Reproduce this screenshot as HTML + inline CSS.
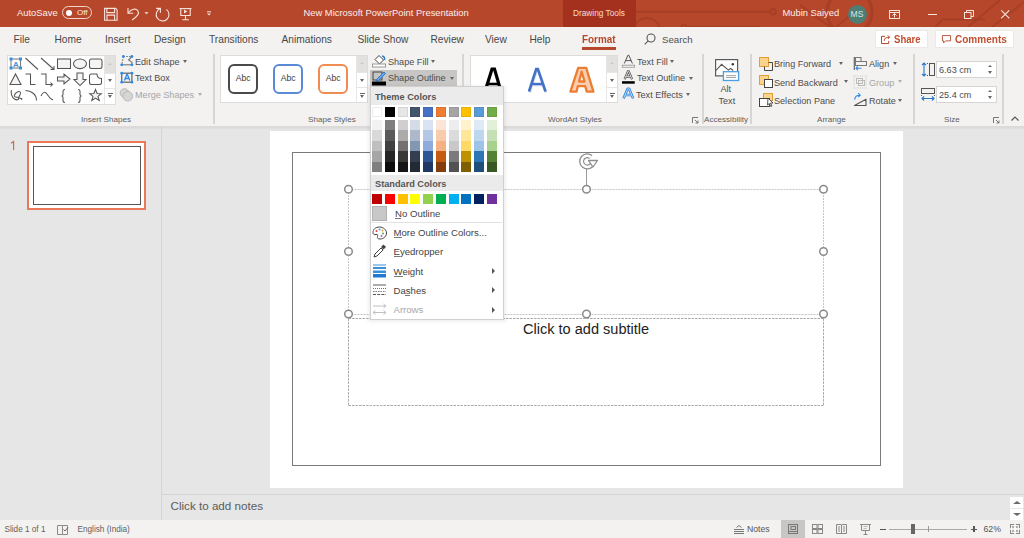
<!DOCTYPE html>
<html><head><meta charset="utf-8">
<style>
*{margin:0;padding:0;box-sizing:border-box}
html,body{width:1024px;height:538px;overflow:hidden;background:#e6e6e6;font-family:"Liberation Sans",sans-serif;color:#444}
.a{position:absolute}
.t{position:absolute;white-space:nowrap;line-height:1}
.sep{position:absolute;width:1.5px;background:#d8d6d4}
.gal{position:absolute;background:#fff;border:1px solid #dedcda}
.tab{font-size:10.2px;color:#484848;top:35px}
.rb{font-size:9.1px;color:#4c4c4c}
.grp{font-size:8.1px;color:#606060;top:116px}
.dd{position:absolute;width:0;height:0;border-left:2.5px solid transparent;border-right:2.5px solid transparent;border-top:3px solid #666}
.mi{font-size:9.6px;color:#444}
svg{position:absolute;overflow:visible}
</style></head><body>
<!-- ===== TITLE BAR ===== -->
<div class="a" style="left:0;top:0;width:1024px;height:27px;background:#b7472a"></div>
<svg style="left:0;top:0" width="1024" height="27">
 <g stroke="#a73f26" stroke-width="2" fill="none">
  <line x1="636" y1="11.7" x2="770" y2="11.7"/>
  <circle cx="773" cy="11.7" r="2.8"/>
  <circle cx="647" cy="31" r="13"/>
  <circle cx="684" cy="27" r="2.5"/>
  <line x1="687" y1="27" x2="760" y2="27"/>
  <circle cx="849.5" cy="12" r="22.5" stroke-width="3"/>
  <line x1="836" y1="27" x2="851" y2="15"/>
  <line x1="800" y1="5" x2="830" y2="27"/>
  <path d="M935 27l8-7.5h42"/>
  <line x1="968" y1="27" x2="1000" y2="0"/>
  <line x1="992" y1="27" x2="1024" y2="2"/>
 </g>
</svg>
<div class="a" style="left:563px;top:0;width:73px;height:27px;background:#a3311e"></div>
<div class="t" style="left:573px;top:9px;font-size:8.3px;color:#f4dcd6">Drawing Tools</div>
<div class="t" style="left:303.5px;top:8px;font-size:9.4px;color:#fbeeea">New Microsoft PowerPoint Presentation</div>
<div class="t" style="left:17px;top:8px;font-size:9.4px;color:#fbeeea">AutoSave</div>
<div class="a" style="left:62px;top:6px;width:30px;height:13px;border:1px solid #f3d6cf;border-radius:7px"></div>
<div class="a" style="left:65.5px;top:9.5px;width:6px;height:6px;background:#fff;border-radius:50%"></div>
<div class="t" style="left:77px;top:8.5px;font-size:8px;color:#fbeeea">Off</div>
<!-- save icon -->
<svg style="left:0;top:0" width="220" height="27">
 <g stroke="#f7e3de" stroke-width="1.1" fill="none">
  <path d="M104.6 8.4h11l1.5 1.5v10.4h-12.5z"/>
  <path d="M106.8 8.4v4.2h7.8v-4.2"/>
  <path d="M107 20.3v-5.2h7.6v5.2"/>
  <path d="M128 8v5.3h5.2"/>
  <path d="M128.3 13c3-4 7.5-5 9.5-2.3 1.8 2.5 0 5.5-5.8 9.3"/>
  <path d="M166.4 9.4A6.4 6.4 0 1 1 160.2 8.6"/>
  <path d="M156.2 8.4h4.2v4.3"/>
  <path d="M179.5 8.6h12"/>
  <path d="M180.8 8.6v6.9h9.4v-6.9"/>
  <path d="M185.5 15.5v4.1M182.3 19.8h6.6"/>
 </g>
 <path d="M184 9.6l3.3 1.9-3.3 1.9z" fill="#f7e3de"/>
 <path d="M144.5 12.3h4l-2 2z" fill="#f7e3de"/>
 <path d="M207 11.8h4" stroke="#f7e3de" stroke-width="1"/>
 <path d="M207 13.4h4l-2 2z" fill="#f7e3de"/>
</svg>
<div class="t" style="left:782.5px;top:9px;font-size:9.35px;color:#fbeeea">Mubin Saiyed</div>
<div class="a" style="left:848px;top:4.5px;width:19px;height:19px;border-radius:50%;background:#4e7d74"></div>
<div class="t" style="left:850.5px;top:9.5px;font-size:8.6px;color:#d6e6e2">MS</div>
<!-- ribbon display options -->
<svg style="left:889px;top:9.5px" width="11" height="9" viewBox="0 0 11 9">
 <g stroke="#f7e3de" stroke-width="1" fill="none"><rect x="0.5" y="0.5" width="10" height="8"/><path d="M0.5 2.5h10"/><path d="M5.5 7.5v-4M3.5 5.5l2-2 2 2"/></g>
</svg>
<div class="a" style="left:927.5px;top:13.5px;width:9px;height:1px;background:#f7e3de"></div>
<svg style="left:964px;top:9.5px" width="10" height="9" viewBox="0 0 10 9">
 <g stroke="#f7e3de" stroke-width="1" fill="none"><rect x="0.5" y="2.5" width="6.5" height="6"/><path d="M2.5 2.5v-2h7v6h-2.5"/></g>
</svg>
<svg style="left:1001px;top:10px" width="8.5" height="8.5" viewBox="0 0 8.5 8.5">
 <g stroke="#f7e3de" stroke-width="1.1" fill="none"><path d="M0.3 0.3l8 8M8.2 0.3l-8 8"/></g>
</svg>

<!-- ===== TABS ===== -->
<div class="a" style="left:0;top:27px;width:1024px;height:99px;background:#f3f2f1"></div>
<div class="t tab" style="left:13.5px">File</div>
<div class="t tab" style="left:54.5px">Home</div>
<div class="t tab" style="left:105px">Insert</div>
<div class="t tab" style="left:154px">Design</div>
<div class="t tab" style="left:209px">Transitions</div>
<div class="t tab" style="left:281.5px">Animations</div>
<div class="t tab" style="left:357.5px">Slide Show</div>
<div class="t tab" style="left:430.5px">Review</div>
<div class="t tab" style="left:485px">View</div>
<div class="t tab" style="left:529.5px">Help</div>
<div class="t tab" style="left:582.3px;color:#b7472a;font-size:10.8px;top:34px;font-weight:bold;transform:scaleX(0.915);transform-origin:0 0">Format</div>
<div class="a" style="left:582px;top:47px;width:34px;height:3px;background:#b7472a"></div>
<svg style="left:644px;top:33px" width="12" height="12" viewBox="0 0 12 12">
 <g stroke="#555" stroke-width="1.1" fill="none"><circle cx="7" cy="5" r="4"/><path d="M4.2 7.8L0.7 11.3"/></g>
</svg>
<div class="t tab" style="left:662px;font-size:9.7px;color:#505050;top:35px">Search</div>
<!-- Share / Comments -->
<div class="a" style="left:875px;top:29.5px;width:53px;height:18.5px;background:#fff;border:1px solid #ebe9e7;border-radius:1px"></div>
<svg style="left:881px;top:35px" width="10" height="9" viewBox="0 0 11 10">
 <g stroke="#b7472a" stroke-width="1.1" fill="none"><path d="M4.5 1.5h-4v8h8v-3"/><path d="M3.5 6.5c0-3 2-4 6-4"/><path d="M7.5 0.5l2 2-2 2"/></g>
</svg>
<div class="t" style="left:894px;top:35.2px;font-size:10.4px;color:#c0502f;font-weight:bold;transform:scaleX(0.92);transform-origin:0 0">Share</div>
<div class="a" style="left:935px;top:29.5px;width:79px;height:18.5px;background:#fff;border:1px solid #ebe9e7;border-radius:1px"></div>
<svg style="left:942px;top:35px" width="9" height="8.5" viewBox="0 0 11 10">
 <g stroke="#b7472a" stroke-width="1.1" fill="none"><path d="M0.5 0.5h10v6.5h-6l-2.5 2.5v-2.5h-1.5z"/></g>
</svg>
<div class="t" style="left:954.5px;top:35.2px;font-size:10.4px;color:#c0502f;font-weight:bold;transform:scaleX(0.965);transform-origin:0 0">Comments</div>
<!-- ===== RIBBON ===== -->
<div class="a" style="left:0;top:126px;width:1024px;height:1px;background:#dcdad8"></div>
<div class="a" style="left:0;top:127px;width:1024px;height:3px;background:linear-gradient(#d9d9d9,#e6e6e6)"></div>
<!-- Insert Shapes gallery -->
<div class="gal" style="left:7px;top:55px;width:109px;height:50px"></div>
<div class="a" style="left:104px;top:56px;width:11px;height:17px;background:#e3e1df"></div>
<div class="a" style="left:104px;top:56px;width:1px;height:48px;background:#e8e6e4"></div>
<div class="a" style="left:104px;top:73px;width:11px;height:1px;background:#e8e6e4"></div>
<div class="a" style="left:104px;top:88px;width:11px;height:1px;background:#e8e6e4"></div>
<div class="dd" style="left:107.5px;top:63px;border-top:none;border-bottom:2.5px solid #c8c8c8"></div>
<div class="dd" style="left:107.5px;top:79px"></div>
<div class="a" style="left:107.5px;top:92.5px;width:5px;height:1px;background:#666"></div>
<div class="dd" style="left:107.5px;top:95px"></div>
<svg style="left:8px;top:56px" width="96" height="48" viewBox="0 0 96 48">
 <g stroke="#555" stroke-width="1.05" fill="none">
  <!-- row1 -->
  <rect x="3" y="3" width="9.5" height="9" stroke="#777"/>
  <line x1="17.5" y1="2" x2="30" y2="13.5"/>
  <line x1="33" y1="2" x2="46" y2="13.5"/><path d="M42.5 13.5h3.5v-3.5"/>
  <rect x="49.5" y="3" width="13" height="9.5" fill="#f4f4f4"/>
  <ellipse cx="72" cy="7.8" rx="6.5" ry="4.8" fill="#f4f4f4"/>
  <rect x="81.5" y="3" width="12.5" height="9.5" rx="2" fill="#f4f4f4"/>
  <!-- row2 -->
  <path d="M2 28.5l5.5-10.5 5.5 10.5z" fill="#f4f4f4"/>
  <path d="M17.5 18h5v10.5h5"/>
  <path d="M33 18h5v10.5h6"/><path d="M42.5 26.5l2 2-2 2"/>
  <path d="M49.5 21h6.5v-3l6 5-6 5v-3h-6.5z" fill="#f4f4f4"/>
  <path d="M69 17h6v6.5h3l-6 6-6-6h3z" fill="#f4f4f4"/>
  <path d="M81.5 20a2 2 0 0 1 2-2h5.5c0 2.5 1.5 4.5 4.5 4.5v4a2 2 0 0 1-2 2h-8a2 2 0 0 1-2-2z" />
  <!-- row3 -->
  <path d="M3.5 34c-1 3 0 7 3 9 2 1.5 5 1 4-1s-5 0-4-3 6-5 6-2-3 4-1 5 3 0 2 2"/>
  <path d="M17.5 34.5c6 0 11 4 11 10"/>
  <path d="M33 40c2-4 4-5 6-2s3 5 6 6"/>
  <path d="M57 33.5c-1.5 0-2 .5-2 2v3c0 1-.5 1.5-1.5 1.5 1 0 1.5.5 1.5 1.5v3c0 1.5.5 2 2 2"/>
  <path d="M70 33.5c1.5 0 2 .5 2 2v3c0 1 .5 1.5 1.5 1.5-1 0-1.5.5-1.5 1.5v3c0 1.5-.5 2-2 2"/>
  <path d="M87.5 33.5l1.6 4 4.2.2-3.3 2.7 1.2 4.1-3.7-2.4-3.7 2.4 1.2-4.1-3.3-2.7 4.2-.2z" fill="#f4f4f4"/>
 </g>
 <g fill="#3a8fd9">
  <rect x="1.5" y="1.5" width="3" height="3"/><rect x="11" y="1.5" width="3" height="3"/>
  <rect x="1.5" y="10.5" width="3" height="3"/><rect x="11" y="10.5" width="3" height="3"/>
 </g>
 <text x="5" y="11" font-size="8" font-weight="bold" fill="#3a8fd9" font-family="Liberation Sans">A</text>
</svg>
<!-- Edit Shape / Text Box / Merge -->
<svg style="left:120px;top:55px" width="15" height="48" viewBox="0 0 15 48">
 <g stroke="#777" stroke-width="1.1" fill="none">
  <path d="M3.4 1.5h8.5M3.4 1.5L1.7 9.8" stroke-dasharray="1.6 1.2"/>
  <path d="M1.7 9.8h10.2"/>
  <path d="M11.9 1.5L8.6 5l3.3 2.2v2.6"/>
 </g>
 <g fill="#2e8ae6">
  <circle cx="3.4" cy="1.5" r="1.4"/><circle cx="11.9" cy="1.5" r="1.4"/><circle cx="1.7" cy="9.8" r="1.4"/><circle cx="11.9" cy="9.8" r="1.4"/>
 </g>
 <rect x="1.7" y="18.2" width="10.2" height="9" stroke="#6a6a6a" stroke-width="1.3" fill="none"/>
 <g fill="#2e8ae6">
  <circle cx="1.7" cy="18.2" r="1.4"/><circle cx="11.9" cy="18.2" r="1.4"/><circle cx="1.7" cy="27.2" r="1.4"/><circle cx="11.9" cy="27.2" r="1.4"/>
 </g>
 <path d="M4.4 25.5l2.4-6h0.6l2.4 6M5.3 23.5h3.6" stroke="#2e8ae6" stroke-width="1.3" fill="none"/>
 <g stroke="#b8b8b8" stroke-width="1" fill="#d6d6d6"><circle cx="4.5" cy="38" r="4.3"/><circle cx="7.8" cy="41.2" r="4.8"/></g>
 <path d="M4.5 33.7a4.3 4.3 0 0 1 0 8.6" stroke="#b8b8b8" fill="none" opacity="0"/>
</svg>
<div class="t rb" style="left:135px;top:57.5px">Edit Shape</div><div class="dd" style="left:183.0px;top:60.0px"></div>
<div class="t rb" style="left:135px;top:73.5px">Text Box</div>
<div class="t rb" style="left:135px;top:90.7px;color:#a6a6a6">Merge Shapes</div><div class="dd" style="left:198.0px;top:92.5px;border-top-color:#b0b0b0"></div>
<div class="t grp" style="left:81px">Insert Shapes</div>
<div class="sep" style="left:213px;top:54px;height:70px"></div>

<!-- Shape Styles gallery -->
<div class="gal" style="left:220px;top:55px;width:148px;height:48px"></div>
<div class="a" style="left:356px;top:56px;width:11px;height:17px;background:#e3e1df"></div>
<div class="a" style="left:356px;top:56px;width:1px;height:46px;background:#e8e6e4"></div>
<div class="a" style="left:356px;top:72px;width:11px;height:1px;background:#e8e6e4"></div>
<div class="a" style="left:356px;top:87px;width:11px;height:1px;background:#e8e6e4"></div>
<div class="dd" style="left:359.5px;top:62px;border-top:none;border-bottom:2.5px solid #c8c8c8"></div>
<div class="dd" style="left:359.5px;top:79px"></div>
<div class="a" style="left:359.5px;top:92.5px;width:5px;height:1px;background:#666"></div>
<div class="dd" style="left:359.5px;top:95px"></div>
<div class="a" style="left:228px;top:64px;width:30px;height:30px;border:2px solid #4a4a4a;border-radius:6px"></div>
<div class="a" style="left:273px;top:64px;width:30px;height:30px;border:2px solid #5d8ad6;border-radius:6px"></div>
<div class="a" style="left:318px;top:64px;width:30px;height:30px;border:2px solid #f08c52;border-radius:6px"></div>
<div class="t" style="left:235.7px;top:74px;font-size:8.6px;color:#3a3a3a">Abc</div>
<div class="t" style="left:280.7px;top:74px;font-size:8.6px;color:#3a3a3a">Abc</div>
<div class="t" style="left:325.7px;top:74px;font-size:8.6px;color:#3a3a3a">Abc</div>
<!-- Shape Fill / Outline -->
<div class="a" style="left:370px;top:70px;width:87px;height:17px;background:#c8c6c4"></div>
<svg style="left:372px;top:54px" width="14" height="32" viewBox="0 0 14 32">
 <path d="M3 5.5l4-4 4.5 4.5-4 4z" stroke="#444" stroke-width="1" fill="#fff"/>
 <path d="M10 2c2 0 3 2 2.5 4" stroke="#2a78c8" stroke-width="1.5" fill="none"/>
 <rect x="0.5" y="10" width="13" height="3" stroke="#999" stroke-width="1" fill="#fff"/>
 <rect x="1" y="18" width="9" height="8" stroke="#444" stroke-width="1" fill="none"/>
 <path d="M5 25l7-7 1.5 1.5-7 7-2 .5z" stroke="#2a78c8" stroke-width="1" fill="#6aaae8"/>
 <rect x="0" y="27.5" width="14" height="4" fill="#000"/>
</svg>
<div class="t rb" style="left:388px;top:58px">Shape Fill</div><div class="dd" style="left:431.0px;top:60.0px"></div>
<div class="t rb" style="left:388px;top:73.5px">Shape Outline</div><div class="dd" style="left:450.0px;top:76.5px"></div>
<div class="t grp" style="left:308px">Shape Styles</div>
<div class="sep" style="left:462px;top:54px;height:70px"></div>

<!-- WordArt gallery -->
<div class="gal" style="left:470px;top:55px;width:148px;height:48px"></div>
<div class="a" style="left:606px;top:56px;width:11px;height:17px;background:#e3e1df"></div>
<div class="a" style="left:606px;top:56px;width:1px;height:46px;background:#e8e6e4"></div>
<div class="a" style="left:606px;top:72px;width:11px;height:1px;background:#e8e6e4"></div>
<div class="a" style="left:606px;top:87px;width:11px;height:1px;background:#e8e6e4"></div>
<div class="dd" style="left:609.5px;top:62px;border-top:none;border-bottom:2.5px solid #c8c8c8"></div>
<div class="dd" style="left:609.5px;top:79px"></div>
<div class="a" style="left:609.5px;top:92.5px;width:5px;height:1px;background:#666"></div>
<div class="dd" style="left:609.5px;top:95px"></div>
<svg style="left:470px;top:55px" width="136" height="47" viewBox="0 0 136 47">
 <path d="M15 36.5L22 14h2.5L31 36.5" stroke="#000" stroke-width="3.2" fill="none" stroke-linejoin="miter"/>
 <path d="M18 29h10" stroke="#000" stroke-width="2.6"/>
 <g opacity="0.25" transform="translate(0.6,1)"><path d="M59 36.5L66.2 14h1.6L75.5 36.5M62 29h11" stroke="#4472c4" stroke-width="2.6" fill="none"/></g>
 <path d="M59 36.5L66.2 14h1.6L75.5 36.5" stroke="#4472c4" stroke-width="2.6" fill="none"/>
 <path d="M62 29h11" stroke="#4472c4" stroke-width="2.4"/>
 <path d="M108.2 12.8h8L123.4 36.6h-6.6L115.2 31.2h-7.4L106.6 36.6h-6.2z M111.7 16.7L109 26.5h5.5z" fill="#f8cfb2" fill-rule="evenodd" stroke="#ed7d31" stroke-width="2.3" stroke-linejoin="round"/>
</svg>
<!-- Text Fill/Outline/Effects -->
<svg style="left:617px;top:52px" width="20" height="50" viewBox="0 0 20 50">
 <path d="M7.3 11.5L10.9 3.2h0.9L15.4 11.5M8.6 8.6h5.5" stroke="#555" stroke-width="1" fill="none"/>
 <rect x="5.3" y="13.2" width="12.3" height="2" stroke="#999" stroke-width="0.9" fill="#fff"/>
 <path d="M7.6 27.3L11 19.3h0.7L15.1 27.3M8.9 24.6h4.9" stroke="#555" stroke-width="2.2" fill="none"/>
 <path d="M7.6 27.3L11 19.3h0.7L15.1 27.3M8.9 24.6h4.9" stroke="#fff" stroke-width="0.7" fill="none"/>
 <rect x="5" y="29.2" width="12.7" height="2.5" fill="#000"/>
 <path d="M6.5 46.6L10.6 36.8h1.5L16.2 46.6M8.2 43h6.3" stroke="#2e86de" stroke-width="2.6" fill="none" stroke-linejoin="round"/>
 <path d="M6.5 46.6L10.6 36.8h1.5L16.2 46.6M8.2 43h6.3" stroke="#d6eafb" stroke-width="0.8" fill="none"/>
</svg>
<div class="t rb" style="left:637px;top:58px">Text Fill</div><div class="dd" style="left:670.0px;top:60.0px"></div>
<div class="t rb" style="left:637px;top:73.5px">Text Outline</div><div class="dd" style="left:689.0px;top:76.5px"></div>
<div class="t rb" style="left:636px;top:91px">Text Effects</div><div class="dd" style="left:686.0px;top:92.5px"></div>
<div class="t grp" style="left:548px">WordArt Styles</div>
<svg style="left:692px;top:117px" width="7" height="7" viewBox="0 0 7 7"><g stroke="#777" stroke-width="1" fill="none"><path d="M0.5 6V0.5H6"/><path d="M3 3l3 3M6 3.5V6H3.5"/></g></svg>
<div class="sep" style="left:702px;top:54px;height:70px"></div>

<!-- Accessibility -->
<svg style="left:715px;top:58.5px" width="26" height="23" viewBox="0 0 26 23">
 <rect x="0.6" y="0.6" width="22" height="16.3" stroke="#5a5a5a" stroke-width="1.2" fill="#fff"/>
 <path d="M1 11.5l5.6-6.2 6.8 5.8 2.2-1.6 2.6 2" stroke="#555" stroke-width="1.1" fill="none"/>
 <circle cx="17.8" cy="5.2" r="1.2" fill="#333"/>
 <rect x="8.4" y="12.7" width="15.2" height="8.8" stroke="#4a9fe0" stroke-width="1.3" fill="#fff"/>
 <path d="M11 16.6h10M11 18.5h10" stroke="#999" stroke-width="0.9"/>
</svg>
<div class="t rb" style="left:720.5px;top:84.5px">Alt</div>
<div class="t rb" style="left:718.5px;top:96.5px">Text</div>
<div class="t grp" style="left:704px">Accessibility</div>
<div class="sep" style="left:750px;top:54px;height:70px"></div>

<!-- Arrange -->
<svg style="left:759.2px;top:57.4px" width="15" height="52" viewBox="0 0 15 52">
 <rect x="0.5" y="0.5" width="9" height="9" fill="#fcd38b" stroke="#e59d36" stroke-width="1"/>
 <path d="M9.5 5.5h4v8h-8v-4" stroke="#444" stroke-width="1" fill="none"/>
 <rect x="0.5" y="18.5" width="9" height="9" fill="#fcd38b" stroke="#e59d36" stroke-width="1"/>
 <rect x="5.5" y="22.5" width="8" height="8" fill="#fff" stroke="#444" stroke-width="1"/>
 <rect x="4.5" y="36.5" width="9" height="7" fill="#fcd38b" stroke="#e59d36" stroke-width="1"/>
 <rect x="0.5" y="41.5" width="10" height="8" fill="#fff" stroke="#444" stroke-width="1"/>
 <path d="M9 41l5 5h-2.5l1.5 3-1.2.5-1.5-3-1.8 1.5z" fill="#fff" stroke="#333" stroke-width=".8"/>
</svg>
<div class="t rb" style="left:774px;top:59.5px">Bring Forward</div><div class="dd" style="left:839.0px;top:62.0px"></div>
<div class="t rb" style="left:774px;top:78.5px">Send Backward</div><div class="dd" style="left:844.0px;top:80.0px"></div>
<div class="t rb" style="left:774px;top:97px">Selection Pane</div>
<svg style="left:853px;top:56px" width="15" height="52" viewBox="0 0 15 52">
 <path d="M1.3 1v13" stroke="#666" stroke-width="1.2"/>
 <rect x="2.5" y="1.5" width="5.5" height="4" fill="none" stroke="#777" stroke-width="1"/>
 <rect x="2.5" y="5.5" width="11" height="4" fill="none" stroke="#777" stroke-width="1"/>
 <path d="M8.5 12.3H3M4.8 10.5L3 12.3l1.8 1.8" stroke="#2e8ae6" stroke-width="1.1" fill="none"/>
 <g fill="#bbb"><rect x="0.5" y="19.5" width="1" height="1"/><rect x="12.5" y="19.5" width="1" height="1"/><rect x="0.5" y="31.5" width="1" height="1"/><rect x="12.5" y="31.5" width="1" height="1"/></g>
 <g stroke="#c4c4c4" stroke-width="1" fill="none" stroke-dasharray="1 1.2"><path d="M2.5 20h9M2.5 32h9M1 21.5v9M13 21.5v9"/></g>
 <rect x="3.5" y="22.5" width="6" height="5" fill="none" stroke="#bbb"/><rect x="5.5" y="24.5" width="6" height="5" fill="none" stroke="#bbb"/>
 <path d="M1.5 49.5L13 43.2v6.3z" stroke="#555" stroke-width="1.1" fill="none" stroke-linejoin="round"/>
 <path d="M1.8 43.8c0-3 1.8-4.5 5-4.5M5.2 37.2l2 2-2 2" stroke="#2e8ae6" stroke-width="1.1" fill="none"/>
</svg>
<div class="t rb" style="left:869px;top:59.5px">Align</div><div class="dd" style="left:893.0px;top:62.0px"></div>
<div class="t rb" style="left:869px;top:78.5px;color:#a6a6a6">Group</div><div class="dd" style="left:898.0px;top:80.0px;border-top-color:#b0b0b0"></div>
<div class="t rb" style="left:869px;top:96.7px">Rotate</div><div class="dd" style="left:898.0px;top:98.5px"></div>
<div class="t grp" style="left:817px">Arrange</div>
<div class="sep" style="left:913px;top:54px;height:70px"></div>

<!-- Size -->
<svg style="left:921px;top:62px" width="15" height="40" viewBox="0 0 15 40">
 <path d="M3 1v13M1 3l2-2 2 2M1 12l2 2 2-2" stroke="#2a78c8" stroke-width="1.1" fill="none"/>
 <rect x="8.5" y="1.5" width="5" height="12" fill="none" stroke="#555" stroke-width="1"/>
 <path d="M6 1.5h2M6 13.5h2" stroke="#555" stroke-width="1" stroke-dasharray="1 1"/>
 <rect x="0.5" y="26.5" width="13" height="5" fill="none" stroke="#555" stroke-width="1"/>
 <path d="M0.5 31v3M13.5 31v3" stroke="#555" stroke-width="1" stroke-dasharray="1 1"/>
 <path d="M1 36.5h12M3 34.5l-2 2 2 2M11 34.5l2 2-2 2" stroke="#2a78c8" stroke-width="1.1" fill="none"/>
</svg>
<div class="a" style="left:936px;top:61px;width:61px;height:17px;background:#fff;border:1px solid #d7d5d3"></div>
<div class="a" style="left:936px;top:86px;width:61px;height:17px;background:#fff;border:1px solid #d7d5d3"></div>
<div class="t rb" style="left:939px;top:65.5px">6.63 cm</div>
<div class="t rb" style="left:939px;top:90.5px">25.4 cm</div>
<div class="dd" style="left:987.5px;top:65px;border-top:none;border-bottom:2.5px solid #666"></div>
<div class="dd" style="left:987.5px;top:70.5px"></div>
<div class="dd" style="left:987.5px;top:90px;border-top:none;border-bottom:2.5px solid #666"></div>
<div class="dd" style="left:987.5px;top:95.5px"></div>
<div class="t grp" style="left:944px">Size</div>
<svg style="left:993px;top:117px" width="7" height="7" viewBox="0 0 7 7"><g stroke="#777" stroke-width="1" fill="none"><path d="M0.5 6V0.5H6"/><path d="M3 3l3 3M6 3.5V6H3.5"/></g></svg>
<div class="sep" style="left:1002px;top:54px;height:70px"></div>
<svg style="left:1011px;top:116px" width="8" height="5" viewBox="0 0 8 5"><path d="M0.5 4.5L4 1l3.5 3.5" stroke="#555" stroke-width="1.2" fill="none"/></svg>
<!-- ===== WORK AREA ===== -->
<div class="a" style="left:161px;top:126px;width:1px;height:394px;background:#d4d4d4"></div>
<svg style="left:10px;top:141px" width="6" height="9" viewBox="0 0 6 9"><path d="M1 2.2L3.6 0.6V9" stroke="#d9603f" stroke-width="1.1" fill="none"/></svg>
<div class="a" style="left:27px;top:140.5px;width:119px;height:69.5px;border:2px solid #ec785a;background:#fff"></div>
<div class="a" style="left:33px;top:146px;width:108px;height:59px;border:1px solid #555"></div>
<!-- slide -->
<div class="a" style="left:270px;top:131px;width:633px;height:357px;background:#fff"></div>
<div class="a" style="left:292px;top:152px;width:589px;height:314px;border:1.3px solid #7a7a7a"></div>
<!-- title placeholder selection -->
<svg style="left:0;top:0" width="1024" height="538">
 <g fill="none" stroke-width="1">
  <path d="M348.5 318.5h475M348.5 318.5v87M823.5 318.5v87M348.5 405.5h475" stroke="#ababab" stroke-dasharray="2.5 1"/>
  <path d="M348.5 189.5h475M348.5 314.5h475M348.5 189v125M823.5 189v125" stroke="#c4c4c4" stroke-dasharray="2 1"/>
 </g>
 <path d="M586.5 169v16" stroke="#9a9a9a" stroke-width="1"/>
 <g fill="#fff" stroke="#8a8a8a" stroke-width="1.5">
  <circle cx="348.5" cy="189.3" r="3.8"/><circle cx="586.5" cy="189.3" r="3.8"/><circle cx="823.5" cy="189.3" r="3.8"/>
  <circle cx="348.5" cy="251.5" r="3.8"/><circle cx="823.5" cy="251.5" r="3.8"/>
  <circle cx="348.5" cy="314" r="3.8"/><circle cx="586.5" cy="314" r="3.8"/><circle cx="823.5" cy="314" r="3.8"/>
 </g>
 <path d="M590.8 157A5.6 5.6 0 1 0 591.5 165" stroke="#8e8e8e" stroke-width="5.2" fill="none"/>
 <path d="M590.8 157A5.6 5.6 0 1 0 591.5 165" stroke="#fff" stroke-width="2.6" fill="none"/>
 <path d="M588.5 160.5l9 0-4.5 6.5z" fill="#fff" stroke="#8e8e8e" stroke-width="1.3" stroke-linejoin="round"/>
</svg>
<div class="t" style="left:523px;top:322px;font-size:14.55px;color:#222">Click to add subtitle</div>
<!-- notes -->
<div class="a" style="left:162px;top:494px;width:862px;height:1px;background:#d4d4d4"></div>
<div class="t" style="left:170.5px;top:500px;font-size:11.65px;color:#5c5c5c">Click to add notes</div>
<div class="a" style="left:1010px;top:497px;width:13px;height:11px;background:#fff"></div>
<div class="a" style="left:1010px;top:509px;width:13px;height:11px;background:#fff"></div>
<div class="dd" style="left:1013px;top:500.5px;border-left-width:4px;border-right-width:4px;border-top:none;border-bottom:3.5px solid #6a6a6a"></div>
<div class="dd" style="left:1013px;top:512.5px;border-left-width:4px;border-right-width:4px;border-top:3.5px solid #6a6a6a"></div>
<!-- status bar -->
<div class="a" style="left:0;top:520px;width:1024px;height:18px;background:#f3f2f1"></div>
<div class="t" style="left:4.5px;top:526px;font-size:8.2px;color:#606060">Slide 1 of 1</div>
<svg style="left:57px;top:524.5px" width="12" height="10" viewBox="0 0 12 10"><g stroke="#8a8a8a" stroke-width="1" fill="none"><path d="M0.5 0.5h5v9h-5z"/><path d="M5.5 0.5h5v9h-5"/><path d="M6.5 4.5l1.5 1.5 3-3.5" stroke="#666"/></g></svg>
<div class="t" style="left:77.5px;top:526px;font-size:8.2px;color:#606060">English (India)</div>
<svg style="left:734px;top:525px" width="10" height="9" viewBox="0 0 10 9"><g stroke="#777" stroke-width="1" fill="none"><path d="M0 4.5h10M0 6.5h10M0 8.5h10M2.5 2.5L5 .5l2.5 2"/></g></svg>
<div class="t" style="left:747px;top:525px;font-size:8.7px;color:#555">Notes</div>
<div class="a" style="left:781px;top:520px;width:24px;height:18px;background:#c8c6c4"></div>
<svg style="left:788px;top:524px" width="10" height="10" viewBox="0 0 10 10"><g stroke="#777" stroke-width="1" fill="none"><rect x="0.5" y="0.5" width="9" height="9"/><rect x="3" y="2.5" width="4.5" height="3"/><path d="M1 7.5h8"/></g></svg>
<svg style="left:811.5px;top:524px" width="11" height="10" viewBox="0 0 11 10"><g stroke="#888" stroke-width="1" fill="none"><rect x="0.5" y="0.5" width="4.5" height="4"/><rect x="6" y="0.5" width="4.5" height="4"/><rect x="0.5" y="5.5" width="4.5" height="4"/><rect x="6" y="5.5" width="4.5" height="4"/></g></svg>
<svg style="left:835.5px;top:524px" width="11" height="11" viewBox="0 0 11 11"><g stroke="#888" stroke-width="1" fill="none"><path d="M0.5 0.5h4.5l0.5 .5.5-.5h4.5v9h-4.5l-.5.5-.5-.5h-4.5z"/><path d="M5.5 1v9M2 3h2M2 5h2M2 7h2M7 3h2M7 5h2M7 7h2"/></g></svg>
<svg style="left:859.5px;top:523.5px" width="11" height="12" viewBox="0 0 11 12"><g stroke="#888" stroke-width="1" fill="none"><path d="M0 .5h11M1.5 .5v6h8v-6M5.5 6.5v3.5M3.5 10.5h4"/><path d="M3.5 2.5h4M3.5 4.5h3" stroke="#bbb"/></g></svg>
<div class="a" style="left:880px;top:528.5px;width:6px;height:1.2px;background:#555"></div>
<div class="a" style="left:889px;top:529px;width:78px;height:1px;background:#aaa"></div>
<div class="a" style="left:927.5px;top:526px;width:1px;height:6px;background:#999"></div>
<div class="a" style="left:911px;top:524px;width:4px;height:10px;background:#666"></div>
<div class="a" style="left:971px;top:528.5px;width:6px;height:1.2px;background:#555"></div>
<div class="a" style="left:973.4px;top:526px;width:1.2px;height:6px;background:#555"></div>
<div class="t" style="left:983.5px;top:525px;font-size:8.7px;color:#555">62%</div>
<svg style="left:1010px;top:524px" width="10" height="10" viewBox="0 0 10 10"><g stroke="#888" stroke-width="1" fill="none"><rect x="0.5" y="0.5" width="9" height="9"/></g><g stroke="#fff" stroke-width="1.6"><path d="M0 5h10M5 0v10"/></g><g fill="#888"><path d="M2 2l2.5 0.8L2.8 4.5z M8 2l-2.5 0.8 1.7 1.7z M2 8l2.5-0.8-1.7-1.7z M8 8l-2.5-0.8 1.7-1.7z"/></g></svg>
<!-- ===== DROPDOWN MENU ===== -->
<div class="a" style="left:368px;top:86px;width:138px;height:236px;background:rgba(0,0,0,0.06);filter:blur(1.5px)"></div>
<div class="a" style="left:369.5px;top:86px;width:134px;height:234px;background:#fff;border:1px solid #d0d0d0"></div>
<div class="a" style="left:370.5px;top:87px;width:132px;height:18px;background:#ebebeb"></div>
<div class="t" style="left:375px;top:92.5px;font-size:9.2px;font-weight:bold;color:#555">Theme Colors</div>
<div class="a" style="left:372.20px;top:107px;width:10px;height:10px;background:#FFFFFF;box-shadow:inset 0 0 0 1px rgba(0,0,0,0.07)"></div>
<div class="a" style="left:372.20px;top:120.0px;width:10px;height:10.4px;background:#F2F2F2"></div>
<div class="a" style="left:372.20px;top:130.4px;width:10px;height:10.4px;background:#D9D9D9"></div>
<div class="a" style="left:372.20px;top:140.8px;width:10px;height:10.4px;background:#BFBFBF"></div>
<div class="a" style="left:372.20px;top:151.2px;width:10px;height:10.4px;background:#A6A6A6"></div>
<div class="a" style="left:372.20px;top:161.6px;width:10px;height:10.4px;background:#808080"></div>
<div class="a" style="left:384.95px;top:107px;width:10px;height:10px;background:#000000;box-shadow:inset 0 0 0 1px rgba(0,0,0,0.07)"></div>
<div class="a" style="left:384.95px;top:120.0px;width:10px;height:10.4px;background:#7F7F7F"></div>
<div class="a" style="left:384.95px;top:130.4px;width:10px;height:10.4px;background:#595959"></div>
<div class="a" style="left:384.95px;top:140.8px;width:10px;height:10.4px;background:#404040"></div>
<div class="a" style="left:384.95px;top:151.2px;width:10px;height:10.4px;background:#262626"></div>
<div class="a" style="left:384.95px;top:161.6px;width:10px;height:10.4px;background:#0D0D0D"></div>
<div class="a" style="left:397.70px;top:107px;width:10px;height:10px;background:#E7E6E6;box-shadow:inset 0 0 0 1px rgba(0,0,0,0.07)"></div>
<div class="a" style="left:397.70px;top:120.0px;width:10px;height:10.4px;background:#D0CECE"></div>
<div class="a" style="left:397.70px;top:130.4px;width:10px;height:10.4px;background:#AEAAAA"></div>
<div class="a" style="left:397.70px;top:140.8px;width:10px;height:10.4px;background:#757171"></div>
<div class="a" style="left:397.70px;top:151.2px;width:10px;height:10.4px;background:#3B3838"></div>
<div class="a" style="left:397.70px;top:161.6px;width:10px;height:10.4px;background:#161616"></div>
<div class="a" style="left:410.45px;top:107px;width:10px;height:10px;background:#44546A;box-shadow:inset 0 0 0 1px rgba(0,0,0,0.07)"></div>
<div class="a" style="left:410.45px;top:120.0px;width:10px;height:10.4px;background:#D6DCE5"></div>
<div class="a" style="left:410.45px;top:130.4px;width:10px;height:10.4px;background:#ADB9CA"></div>
<div class="a" style="left:410.45px;top:140.8px;width:10px;height:10.4px;background:#8497B0"></div>
<div class="a" style="left:410.45px;top:151.2px;width:10px;height:10.4px;background:#333F50"></div>
<div class="a" style="left:410.45px;top:161.6px;width:10px;height:10.4px;background:#222A35"></div>
<div class="a" style="left:423.20px;top:107px;width:10px;height:10px;background:#4472C4;box-shadow:inset 0 0 0 1px rgba(0,0,0,0.07)"></div>
<div class="a" style="left:423.20px;top:120.0px;width:10px;height:10.4px;background:#DAE3F3"></div>
<div class="a" style="left:423.20px;top:130.4px;width:10px;height:10.4px;background:#B4C7E7"></div>
<div class="a" style="left:423.20px;top:140.8px;width:10px;height:10.4px;background:#8FAADC"></div>
<div class="a" style="left:423.20px;top:151.2px;width:10px;height:10.4px;background:#2F5597"></div>
<div class="a" style="left:423.20px;top:161.6px;width:10px;height:10.4px;background:#203864"></div>
<div class="a" style="left:435.95px;top:107px;width:10px;height:10px;background:#ED7D31;box-shadow:inset 0 0 0 1px rgba(0,0,0,0.07)"></div>
<div class="a" style="left:435.95px;top:120.0px;width:10px;height:10.4px;background:#FBE5D6"></div>
<div class="a" style="left:435.95px;top:130.4px;width:10px;height:10.4px;background:#F8CBAD"></div>
<div class="a" style="left:435.95px;top:140.8px;width:10px;height:10.4px;background:#F4B183"></div>
<div class="a" style="left:435.95px;top:151.2px;width:10px;height:10.4px;background:#C55A11"></div>
<div class="a" style="left:435.95px;top:161.6px;width:10px;height:10.4px;background:#843C0C"></div>
<div class="a" style="left:448.70px;top:107px;width:10px;height:10px;background:#A5A5A5;box-shadow:inset 0 0 0 1px rgba(0,0,0,0.07)"></div>
<div class="a" style="left:448.70px;top:120.0px;width:10px;height:10.4px;background:#EDEDED"></div>
<div class="a" style="left:448.70px;top:130.4px;width:10px;height:10.4px;background:#DBDBDB"></div>
<div class="a" style="left:448.70px;top:140.8px;width:10px;height:10.4px;background:#C9C9C9"></div>
<div class="a" style="left:448.70px;top:151.2px;width:10px;height:10.4px;background:#7B7B7B"></div>
<div class="a" style="left:448.70px;top:161.6px;width:10px;height:10.4px;background:#525252"></div>
<div class="a" style="left:461.45px;top:107px;width:10px;height:10px;background:#FFC000;box-shadow:inset 0 0 0 1px rgba(0,0,0,0.07)"></div>
<div class="a" style="left:461.45px;top:120.0px;width:10px;height:10.4px;background:#FFF2CC"></div>
<div class="a" style="left:461.45px;top:130.4px;width:10px;height:10.4px;background:#FFE699"></div>
<div class="a" style="left:461.45px;top:140.8px;width:10px;height:10.4px;background:#FFD966"></div>
<div class="a" style="left:461.45px;top:151.2px;width:10px;height:10.4px;background:#BF9000"></div>
<div class="a" style="left:461.45px;top:161.6px;width:10px;height:10.4px;background:#7F6000"></div>
<div class="a" style="left:474.20px;top:107px;width:10px;height:10px;background:#5B9BD5;box-shadow:inset 0 0 0 1px rgba(0,0,0,0.07)"></div>
<div class="a" style="left:474.20px;top:120.0px;width:10px;height:10.4px;background:#DEEBF7"></div>
<div class="a" style="left:474.20px;top:130.4px;width:10px;height:10.4px;background:#BDD7EE"></div>
<div class="a" style="left:474.20px;top:140.8px;width:10px;height:10.4px;background:#9DC3E6"></div>
<div class="a" style="left:474.20px;top:151.2px;width:10px;height:10.4px;background:#2E75B6"></div>
<div class="a" style="left:474.20px;top:161.6px;width:10px;height:10.4px;background:#1F4E79"></div>
<div class="a" style="left:486.95px;top:107px;width:10px;height:10px;background:#70AD47;box-shadow:inset 0 0 0 1px rgba(0,0,0,0.07)"></div>
<div class="a" style="left:486.95px;top:120.0px;width:10px;height:10.4px;background:#E2F0D9"></div>
<div class="a" style="left:486.95px;top:130.4px;width:10px;height:10.4px;background:#C5E0B4"></div>
<div class="a" style="left:486.95px;top:140.8px;width:10px;height:10.4px;background:#A9D18E"></div>
<div class="a" style="left:486.95px;top:151.2px;width:10px;height:10.4px;background:#548235"></div>
<div class="a" style="left:486.95px;top:161.6px;width:10px;height:10.4px;background:#385723"></div>
<div class="a" style="left:370.5px;top:175px;width:132px;height:16px;background:#ebebeb"></div>
<div class="t" style="left:375px;top:179.5px;font-size:9.2px;font-weight:bold;color:#555">Standard Colors</div>
<div class="a" style="left:372.20px;top:194px;width:10px;height:9.5px;background:#C00000"></div>
<div class="a" style="left:384.95px;top:194px;width:10px;height:9.5px;background:#FF0000"></div>
<div class="a" style="left:397.70px;top:194px;width:10px;height:9.5px;background:#FFC000"></div>
<div class="a" style="left:410.45px;top:194px;width:10px;height:9.5px;background:#FFFF00"></div>
<div class="a" style="left:423.20px;top:194px;width:10px;height:9.5px;background:#92D050"></div>
<div class="a" style="left:435.95px;top:194px;width:10px;height:9.5px;background:#00B050"></div>
<div class="a" style="left:448.70px;top:194px;width:10px;height:9.5px;background:#00B0F0"></div>
<div class="a" style="left:461.45px;top:194px;width:10px;height:9.5px;background:#0070C0"></div>
<div class="a" style="left:474.20px;top:194px;width:10px;height:9.5px;background:#002060"></div>
<div class="a" style="left:486.95px;top:194px;width:10px;height:9.5px;background:#7030A0"></div>
<div class="a" style="left:372px;top:206px;width:15px;height:15px;background:#c8c8c8;border:1px solid #b0b0b0"></div>
<div class="t mi" style="left:395px;top:209px">No Outline</div>
<div class="a" style="left:395px;top:218px;width:6px;height:1px;background:#777"></div>
<div class="a" style="left:371px;top:222px;width:131px;height:1px;background:#e2e2e2"></div>
<svg style="left:372px;top:226px" width="15" height="14" viewBox="0 0 15 14">
 <path d="M7.5 1C3.5 1 1 3.5 1 6.5c0 2 1.5 2.5 3 2 1.5-.5 2 .5 1.5 2-.5 1.5.5 2.5 2.5 2.5 4 0 6.5-3 6.5-6S11.5 1 7.5 1z" stroke="#444" stroke-width="1" fill="#fff"/>
 <circle cx="4.5" cy="5" r="1" fill="#e03a3a"/><circle cx="7.5" cy="3.5" r="1" fill="#3aa0e0"/><circle cx="10.5" cy="4.5" r="1" fill="#e0a03a"/><circle cx="11" cy="7.5" r="1" fill="#5ab04a"/><circle cx="9.5" cy="10" r="1" fill="#a05ad0"/>
</svg>
<div class="t mi" style="left:393.5px;top:228px">More Outline Colors...</div>
<div class="a" style="left:393.5px;top:237px;width:8px;height:1px;background:#777"></div>
<svg style="left:373px;top:244px" width="14" height="14" viewBox="0 0 14 14">
 <path d="M1 13l1-3 6-6 2 2-6 6z" stroke="#444" stroke-width="1" fill="#fff"/>
 <path d="M8 3l1.5-1.5 1-1 2.5 2.5-1 1L10.5 5.5z" fill="#444"/>
</svg>
<div class="t mi" style="left:393.5px;top:247px">Eyedropper</div>
<div class="a" style="left:393.5px;top:256px;width:6px;height:1px;background:#777"></div>
<svg style="left:373px;top:264px" width="14" height="14" viewBox="0 0 14 14">
 <rect x="0" y="0.5" width="13" height="1" fill="#3a8fd9"/>
 <rect x="0" y="3" width="13" height="2" fill="#3a8fd9"/>
 <rect x="0" y="6.5" width="13" height="2.5" fill="#3a8fd9"/>
 <rect x="0" y="10" width="13" height="3.5" fill="#1f7ad0"/>
</svg>
<div class="t mi" style="left:393.5px;top:267px">Weight</div>
<div class="a" style="left:393.5px;top:276px;width:9px;height:1px;background:#777"></div>
<div class="dd" style="left:492px;top:267.5px;border-top:3px solid transparent;border-bottom:3px solid transparent;border-left:3.5px solid #555;border-right:none"></div>
<svg style="left:373px;top:284px" width="14" height="12" viewBox="0 0 14 12">
 <path d="M0 1h13" stroke="#777" stroke-width="1.2"/>
 <path d="M0 4.5h13" stroke="#777" stroke-width="1" stroke-dasharray="1 1"/>
 <path d="M0 7.5h13" stroke="#777" stroke-width="1" stroke-dasharray="1.5 1"/>
 <path d="M0 10.5h13" stroke="#555" stroke-width="1.2" stroke-dasharray="3 1.2"/>
</svg>
<div class="t mi" style="left:393.5px;top:286px">Dashes</div>
<div class="a" style="left:405px;top:295px;width:5px;height:1px;background:#777"></div>
<div class="dd" style="left:492px;top:287px;border-top:3px solid transparent;border-bottom:3px solid transparent;border-left:3.5px solid #555;border-right:none"></div>
<svg style="left:373px;top:303px" width="14" height="12" viewBox="0 0 14 12">
 <g stroke="#c0c0c0" stroke-width="1" fill="none">
  <path d="M0 3h13M10.5 1l2.5 2-2.5 2"/><path d="M0 9.5h13M2.5 7.5L0 9.5l2.5 2M10.5 7.5l2.5 2-2.5 2"/>
 </g>
</svg>
<div class="t mi" style="left:393.5px;top:305px;color:#a8a8a8">Arrows</div>
<div class="dd" style="left:492px;top:306.5px;border-top:3px solid transparent;border-bottom:3px solid transparent;border-left:3.5px solid #555;border-right:none"></div>
</body></html>
